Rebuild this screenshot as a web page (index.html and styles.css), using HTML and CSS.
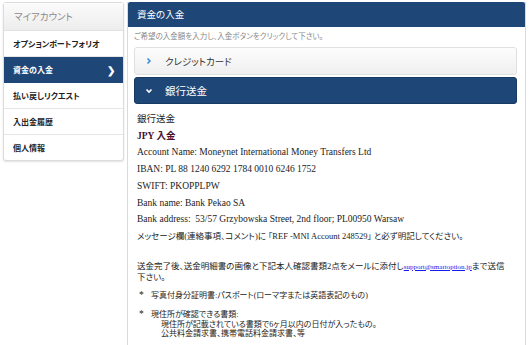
FILE: index.html
```html
<!DOCTYPE html>
<html lang="ja">
<head>
    <meta charset="UTF-8">
    <title>資金の入金</title>
    <link rel="stylesheet" href="styles.css">
</head>
<body>
    <div class="page">
        <div class="sidebar">
            <div class="side-head">マイアカウント</div>
            <a class="side-item" href="#">オプションポートフォリオ</a>
            <a class="side-item active" href="#">資金の入金<span class="arrow">&#10095;</span></a>
            <a class="side-item" href="#">払い戻しリクエスト</a>
            <a class="side-item" href="#">入出金履歴</a>
            <a class="side-item last" href="#">個人情報</a>
        </div>

        <div class="panel">
            <div class="panel-head">資金の入金</div>
            <div class="panel-body">
                <p class="hint">ご希望の入金額を入力し、入金ボタンをクリックして下さい。</p>

                <div class="acc closed">
                    <svg class="acc-icon" width="8" height="8" viewBox="0 0 8 8"><path d="M2.5 1.5 L5 4 L2.5 6.5" fill="none" stroke="#3b8ed8" stroke-width="1.6"/></svg>
                    <span>クレジットカード</span>
                </div>
                <div class="acc open">
                    <svg class="acc-icon" width="8" height="8" viewBox="0 0 8 8"><path d="M1.5 2.5 L4 5 L6.5 2.5" fill="none" stroke="#fff" stroke-width="1.6"/></svg>
                    <span>銀行送金</span>
                </div>

                <div class="bank">
                    <div class="lines">
                        <div>銀行送金</div>
                        <div class="cur">JPY 入金</div>
                        <div>Account Name: Moneynet International Money Transfers Ltd</div>
                        <div>IBAN: PL 88 1240 6292 1784 0010 6246 1752</div>
                        <div>SWIFT: PKOPPLPW</div>
                        <div>Bank name: Bank Pekao SA</div>
                        <div>Bank address:&nbsp; 53/57 Grzybowska Street, 2nd floor; PL00950 Warsaw</div>
                        <div class="ja">メッセージ欄(連絡事項、コメント)に 「REF -MNI Account 248529」 と必ず明記してください。</div>
                    </div>

                    <p class="after">送金完了後、送金明細書の画像と下記本人確認書類2点をメールに添付し<a href="#">support@smartoption.jp</a>まで送信下さい。</p>

                    <div class="docs">
                        <div class="doc"><span class="star">*</span><div>写真付身分証明書:パスポート(ローマ字または英語表記のもの)</div></div>
                        <div class="doc"><span class="star">*</span><div>現住所が確認できる書類:<br><span class="sub">現住所が記載されている書類で6ヶ月以内の日付が入ったもの。<br>公共料金請求書、携帯電話料金請求書、等</span></div></div>
                    </div>
                </div>
            </div>
        </div>
    </div>
</body>
</html>
```

FILE: styles.css
```css
body {
    margin: 0;
    background-color: #fff;
    font-family: "Noto Sans CJK JP", sans-serif;
    font-feature-settings: "palt";
    color: #222;
}
.page {
    display: flex;
    align-items: flex-start;
    gap: 3px;
    padding: 2px 0 0 3px;
    height: 343px;
    overflow: hidden;
}
.sidebar {
    width: 119px;
    flex-shrink: 0;
    border: 1px solid #dcdcdc;
    border-radius: 3px;
    box-shadow: 0 1px 2px rgba(0, 0, 0, 0.12);
    background-color: #fff;
}
.side-head {
    height: 27px;
    line-height: 27px;
    padding-left: 10px;
    font-size: 9.5px;
    color: #8a8a8a;
    background: linear-gradient(#fbfbfb, #ededed);
    border-bottom: 1px solid #e2e2e2;
}
.side-item {
    display: flex;
    align-items: center;
    justify-content: space-between;
    height: 25px;
    padding: 0 8px 0 9px;
    font-size: 8px;
    font-weight: bold;
    color: #222;
    text-decoration: none;
    border-bottom: 1px solid #e6e6e6;
}
.side-item.last {
    border-bottom: none;
}
.side-item.active {
    background-color: #1e4677;
    color: #fff;
    border-bottom-color: #1e4677;
}
.arrow {
    font-size: 10px;
}
.panel {
    width: 397px;
    flex-shrink: 0;
    border: 1px solid #dadada;
    border-top: none;
    height: 400px;
}
.panel-head {
    height: 25px;
    line-height: 24px;
    padding-left: 9px;
    background-color: #1e4677;
    color: #fff;
    font-size: 9.5px;
    border-radius: 2px 2px 0 0;
}
.panel-body {
    padding: 0 8px 0 6px;
}
.hint {
    margin: 3px 0 6px 0;
    font-size: 7.5px;
    color: #888;
}
.acc {
    display: flex;
    align-items: center;
    border-radius: 3px;
    font-size: 9.5px;
    padding-left: 10px;
}
.acc-icon {
    margin-right: 12px;
}
.acc.closed {
    background: linear-gradient(#fdfdfd, #efefef);
    border: 1px solid #e0e0e0;
    color: #333;
    height: 26px;
}
.acc.open {
    margin-top: 2px;
    background-color: #1e4677;
    border: 1px solid #173a63;
    color: #fff;
    height: 25px;
    font-size: 10.5px;
}
.bank {
    padding: 7px 0 0 3px;
    font-family: "Liberation Serif", "Noto Sans CJK JP", serif;
    font-size: 9.5px;
    color: #222;
}
.lines div {
    line-height: 16.7px;
}
.lines .ja {
    font-size: 8.5px;
}
.lines .cur {
    font-weight: bold;
    color: #4a1030;
}
.after {
    margin: 16px 0 0 0;
    padding-right: 8px;
    line-height: 10px;
    font-size: 8.5px;
}
.after a {
    color: #1a1aee;
    font-size: 7px;
}
.docs {
    margin-top: 9px;
    font-size: 8px;
}
.doc {
    display: flex;
    line-height: 9.5px;
    margin-bottom: 10px;
}
.star {
    width: 12px;
    flex-shrink: 0;
    padding-left: 2px;
    font-size: 9.5px;
}
.sub {
    padding-left: 10px;
    display: inline-block;
}
```
